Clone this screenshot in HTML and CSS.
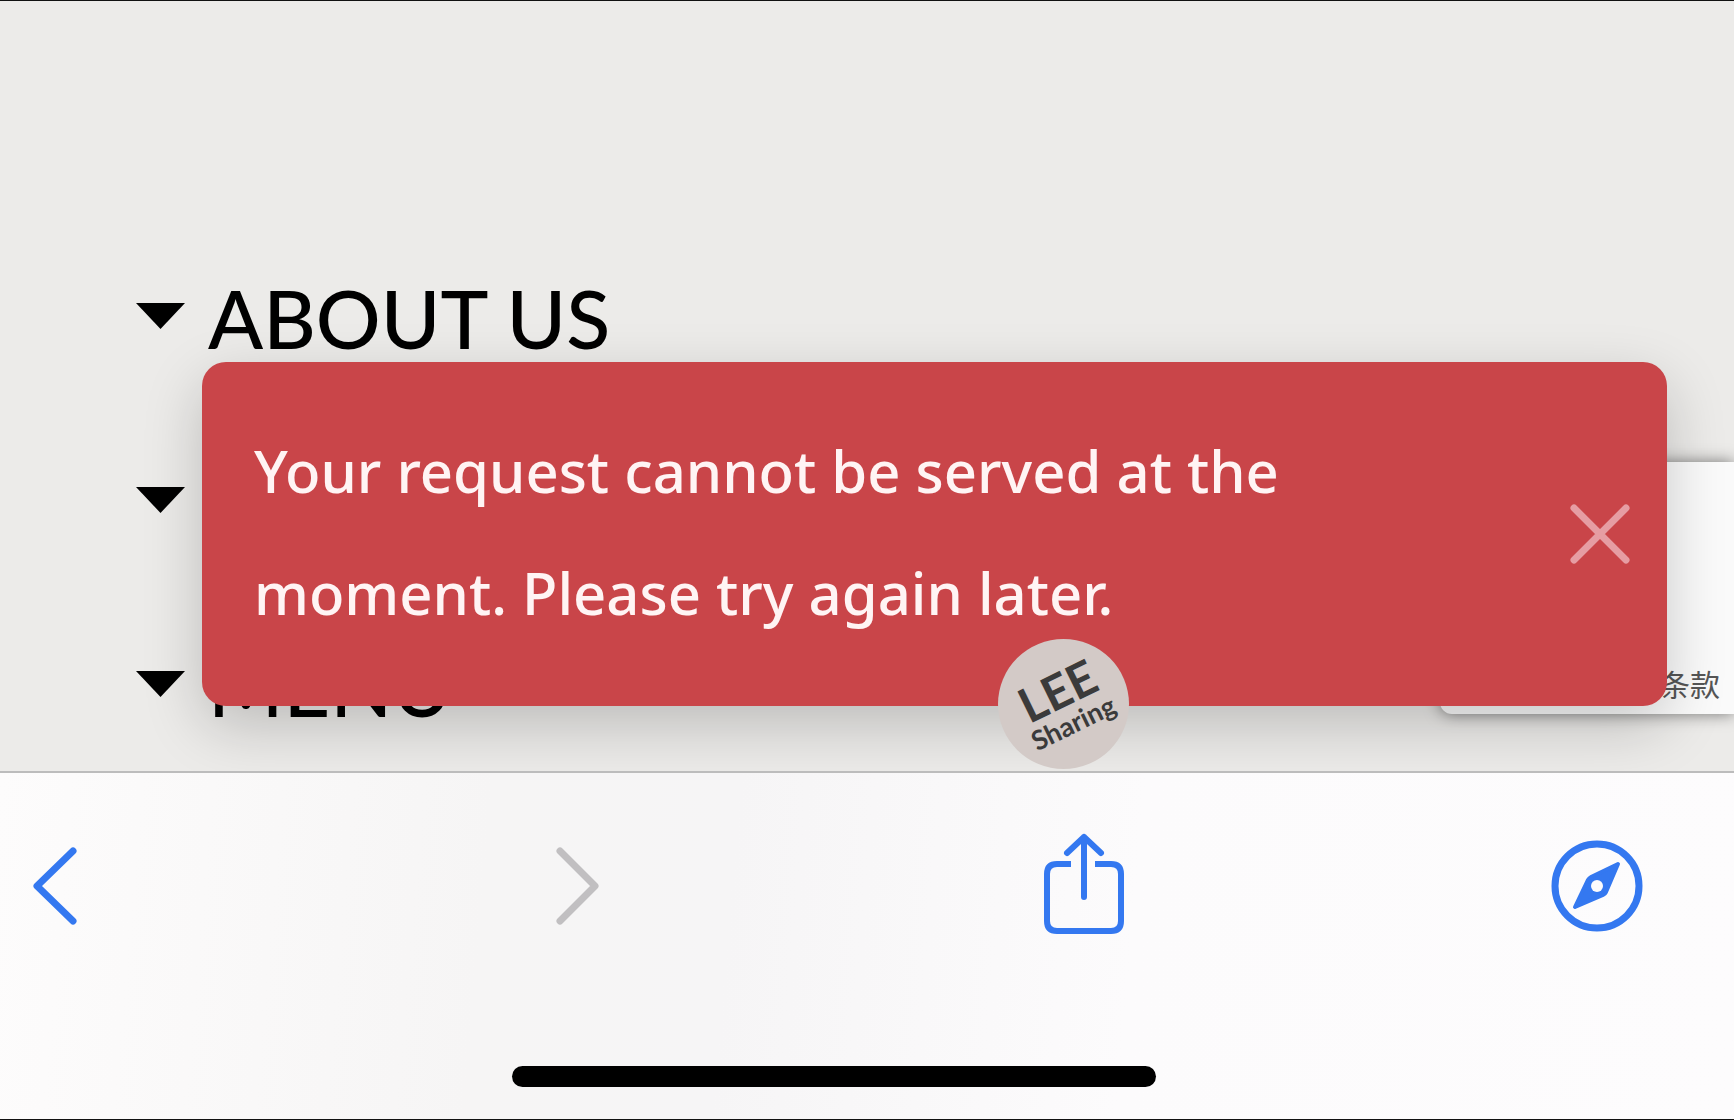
FILE: index.html
```html
<!DOCTYPE html>
<html lang="en">
  <head>
    <meta charset="UTF-8" />
    <meta name="viewport" content="width=device-width, initial-scale=1.0" />
    <title>About us</title>
    <link rel="stylesheet" href="styles.css">
  </head>
  <body>
    <main class="page">
      <!-- Footer menu -->
      <ul class="menu">
        <li><button class="menu-item"><span class="arrow"></span>ABOUT US</button></li>
        <li><button class="menu-item" aria-label="Expand section"><span class="arrow"></span></button></li>
        <li><button class="menu-item"><span class="arrow"></span>MENU</button></li>
      </ul>

      <!-- Captcha card -->
      <aside class="terms-card">
        <a href="#" class="terms-link">条款</a>
      </aside>

      <!-- Error toast -->
      <div class="toast" role="alert">
        <p class="toast-text">Your request cannot be served at the moment. Please try again later.</p>
        <button class="toast-close" aria-label="Close">
          <svg width="60" height="60" viewBox="0 0 60 60" fill="none" stroke="#e69da3" stroke-width="7" stroke-linecap="round">
            <path d="M4 4L56 56M56 4L4 56" />
          </svg>
        </button>
      </div>

      <div class="badge">
        <div class="badge-text">
          <span class="badge-name">LEE</span>
          <span class="badge-sub">Sharing</span>
        </div>
      </div>
    </main>

    <!-- Browser toolbar -->
    <footer class="toolbar">
      <nav class="toolbar-buttons">
        <button class="tool" aria-label="Back">
          <svg width="44" height="78" viewBox="0 0 44 78" fill="none" stroke="#3478f0" stroke-width="7" stroke-linecap="round" stroke-linejoin="round">
            <path d="M40 4L4 39L40 74" />
          </svg>
        </button>
        <button class="tool" aria-label="Forward" disabled>
          <svg width="44" height="78" viewBox="0 0 44 78" fill="none" stroke="#c1bfc1" stroke-width="7" stroke-linecap="round" stroke-linejoin="round">
            <path d="M4 4L39 39L4 74" />
          </svg>
        </button>
        <button class="tool" aria-label="Share">
          <svg width="80" height="106" viewBox="0 0 80 106" fill="none" stroke="#3478f0" stroke-width="6">
            <path d="M27 31H13Q3 31 3 41V88Q3 98 13 98H67Q77 98 77 88V41Q77 31 67 31H51" />
            <path d="M40 64V4M23 20L40 4L57 20" stroke-linecap="round" stroke-linejoin="round" />
          </svg>
        </button>
        <button class="tool" aria-label="Open in browser">
          <svg width="92" height="92" viewBox="0 0 92 92">
            <circle cx="46" cy="46" r="42" fill="none" stroke="#3478f0" stroke-width="7" />
            <path d="M67 24L40 37Q38 38 37 40L24 67L52 55Q54 54 55 52Z" fill="#3478f0" stroke="#3478f0" stroke-width="4" stroke-linejoin="round" />
            <circle cx="46" cy="46" r="6" fill="#fcfbfc" />
          </svg>
        </button>
      </nav>
      <div class="home-bar"></div>
    </footer>
  </body>
</html>
```
FILE: styles.css
```css
* {
  box-sizing: border-box;
}

body {
  margin: 0;
  min-height: 100vh;
  display: flex;
  flex-direction: column;
  border-top: 1px solid #111;
  border-bottom: 1px solid #111;
  background-color: #ecebe9;
  color: #000;
  font-family: Lato, "Noto Sans CJK SC", sans-serif;
}

button {
  padding: 0;
  border: none;
  background: none;
  color: inherit;
  font: inherit;
  cursor: pointer;
}

svg {
  display: block;
}

.page {
  position: relative;
  height: 770px;
  padding-top: 225px;
  overflow: hidden;
}

/* Footer menu */
.menu {
  list-style: none;
  margin: 0;
  padding: 0 0 0 136px;
}

.menu-item {
  display: flex;
  align-items: center;
  gap: 23px;
  height: 184px;
  font-size: 81px;
  font-weight: 500;
  line-height: 104px;
}

.arrow {
  width: 49px;
  height: 26px;
  margin-bottom: 4px;
  background-color: #000;
  clip-path: polygon(0 0, 100% 0, 50% 100%);
}

/* Captcha card behind the toast */
.terms-card {
  position: absolute;
  top: 461px;
  right: 0;
  width: 294px;
  height: 252px;
  display: flex;
  align-items: flex-end;
  justify-content: flex-end;
  padding: 0 14px 10px 0;
  background-color: #fafafa;
  border-radius: 12px 0 0 12px;
  box-shadow: 0 0 16px rgba(0, 0, 0, 0.5);
}

.terms-link {
  color: #555;
  font-size: 30px;
  line-height: 40px;
  text-decoration: none;
}

/* Error toast */
.toast {
  position: absolute;
  top: 361px;
  left: 202px;
  right: 67px;
  display: flex;
  align-items: center;
  justify-content: space-between;
  padding: 0 37px 0 52px;
  background-color: #c94549;
  border-radius: 24px;
  color: #fff4f4;
  box-shadow: 0 20px 60px rgba(0, 0, 0, 0.2);
}

.toast-text {
  max-width: 1100px;
  margin: 0;
  padding: 48px 0 52px;
  font-family: "Noto Sans", sans-serif;
  font-size: 58px;
  font-weight: 500;
  line-height: 122px;
}

/* Round badge over the toast edge */
.badge {
  position: absolute;
  top: 638px;
  left: 998px;
  width: 131px;
  height: 130px;
  display: flex;
  align-items: center;
  justify-content: center;
  background-color: #d3cac7;
  border-radius: 50%;
}

.badge-text {
  display: flex;
  flex-direction: column;
  align-items: center;
  color: #3b3b3b;
  font-weight: 700;
  transform: rotate(-26deg);
}

.badge-name {
  font-size: 48px;
  line-height: 42px;
}

.badge-sub {
  font-size: 27px;
  line-height: 30px;
}

/* Browser toolbar */
.toolbar {
  flex: 1;
  display: flex;
  flex-direction: column;
  justify-content: space-between;
  padding: 60px 0 32px;
  border-top: 2px solid #bcbcbc;
  background: linear-gradient(95deg, #fdfcfc 0%, #f6f5f5 28%, #f6f5f6 42%, #fcfbfc 65%, #fdfcfd 100%);
}

.toolbar-buttons {
  display: grid;
  grid-template-columns: 523fr 488fr 507fr 183fr;
  align-items: center;
  justify-items: start;
  padding-left: 33px;
}

.home-bar {
  width: 644px;
  max-width: 60%;
  height: 21px;
  margin-left: 512px;
  background-color: #000;
  border-radius: 11px;
}
```
